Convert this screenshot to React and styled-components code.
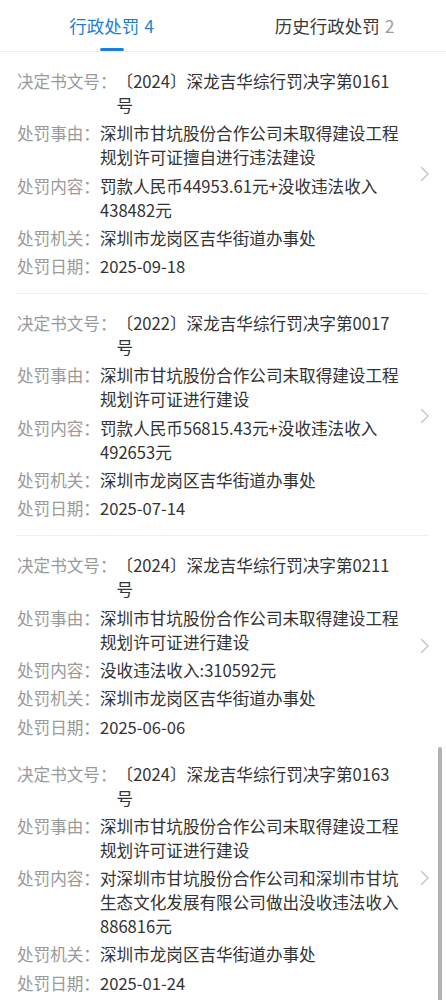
import React from 'react';
import styled, { createGlobalStyle } from 'styled-components';

const GlobalStyle = createGlobalStyle`
    body {
        margin: 0;
        background: #fff;
        font-family: "Noto Sans CJK SC", "Noto Sans", sans-serif;
    }
`;

const Page = styled.div`
    width: 446px;
    min-height: 1000px;
    background: #fff;
`;

const Tabs = styled.div`
    display: grid;
    grid-template-columns: 1fr 1fr;
    height: 51px;
    border-bottom: 1px solid #ececec;
`;

const Tab = styled.div`
    position: relative;
    display: flex;
    align-items: center;
    justify-content: center;
    font-size: 17.5px;
    color: ${p => p.active ? '#1b7fd8' : '#3a3a3a'};

    span {
        margin-left: 5px;
        color: ${p => p.active ? '#1b7fd8' : '#9c9c9c'};
    }

    &::after {
        content: '';
        display: ${p => p.active ? 'block' : 'none'};
        position: absolute;
        bottom: 0;
        left: 50%;
        width: 24px;
        height: 3px;
        margin-left: -12px;
        border-radius: 2px;
        background: #1a7fe0;
    }
`;

const Group = styled.div``;

// one record; the divider is inset 17px left / 18px right, last one in a group has none
const Card = styled.div`
    display: flex;
    align-items: center;
    padding: 17px 0 15px 17px;

    ${Group} > &:not(:last-child) {
        border-bottom: 1px solid #efefef;
        border-image: linear-gradient(to right, transparent 17px, #efefef 17px, #efefef calc(100% - 18px), transparent calc(100% - 18px)) 1;
    }
    ${Group} > &:last-child {
        padding-bottom: 6px;
    }
`;

const Body = styled.div`
    flex: 1;
    display: flex;
    flex-direction: column;
    gap: 4.3px;
`;

const Row = styled.div`
    display: flex;
    font-size: 16.6px;
    line-height: 24px;
`;

const Label = styled.div`
    flex: none;
    white-space: nowrap;
    color: #9a9a9a;
`;

const Value = styled.div`
    flex: 1;
    color: #333;
`;

const Arrow = styled.div`
    flex: none;
    width: 43px;
    display: flex;
    justify-content: center;
`;

const ScrollThumb = styled.div`
    position: fixed;
    top: 747px;
    right: 4px;
    width: 4px;
    height: 280px;
    border-radius: 2px;
    background: #b3b3b3;
`;

const Chevron = () => (
    <svg width="10" height="16" viewBox="0 0 10 16">
        <path d="M1.5 1.5 L8 8 L1.5 14.5" fill="none" stroke="#c8c8c8" strokeWidth="1.5" strokeLinecap="round" strokeLinejoin="round" />
    </svg>
);

const groups = [
    [
        {
            no: '〔2024〕深龙吉华综行罚决字第0161号',
            reason: '深圳市甘坑股份合作公司未取得建设工程规划许可证擅自进行违法建设',
            content: '罚款人民币44953.61元+没收违法收入438482元',
            org: '深圳市龙岗区吉华街道办事处',
            date: '2025-09-18',
        },
        {
            no: '〔2022〕深龙吉华综行罚决字第0017号',
            reason: '深圳市甘坑股份合作公司未取得建设工程规划许可证进行建设',
            content: '罚款人民币56815.43元+没收违法收入492653元',
            org: '深圳市龙岗区吉华街道办事处',
            date: '2025-07-14',
        },
        {
            no: '〔2024〕深龙吉华综行罚决字第0211号',
            reason: '深圳市甘坑股份合作公司未取得建设工程规划许可证进行建设',
            content: '没收违法收入:310592元',
            org: '深圳市龙岗区吉华街道办事处',
            date: '2025-06-06',
        },
    ],
    [
        {
            no: '〔2024〕深龙吉华综行罚决字第0163号',
            reason: '深圳市甘坑股份合作公司未取得建设工程规划许可证进行建设',
            content: '对深圳市甘坑股份合作公司和深圳市甘坑生态文化发展有限公司做出没收违法收入886816元',
            org: '深圳市龙岗区吉华街道办事处',
            date: '2025-01-24',
        },
    ],
];

const fields = [
    ['决定书文号：', 'no'],
    ['处罚事由：', 'reason'],
    ['处罚内容：', 'content'],
    ['处罚机关：', 'org'],
    ['处罚日期：', 'date'],
];

export default function App() {
    return (
        <Page>
            <GlobalStyle />
            <Tabs>
                <Tab active>行政处罚<span>4</span></Tab>
                <Tab>历史行政处罚<span>2</span></Tab>
            </Tabs>
            {groups.map((list, gi) => (
                <Group key={gi}>
                    {list.map((item, i) => (
                        <Card key={i}>
                            <Body>
                                {fields.map(([label, key]) => (
                                    <Row key={key}>
                                        <Label>{label}</Label>
                                        <Value>{item[key]}</Value>
                                    </Row>
                                ))}
                            </Body>
                            <Arrow><Chevron /></Arrow>
                        </Card>
                    ))}
                </Group>
            ))}
            <ScrollThumb />
        </Page>
    );
}
